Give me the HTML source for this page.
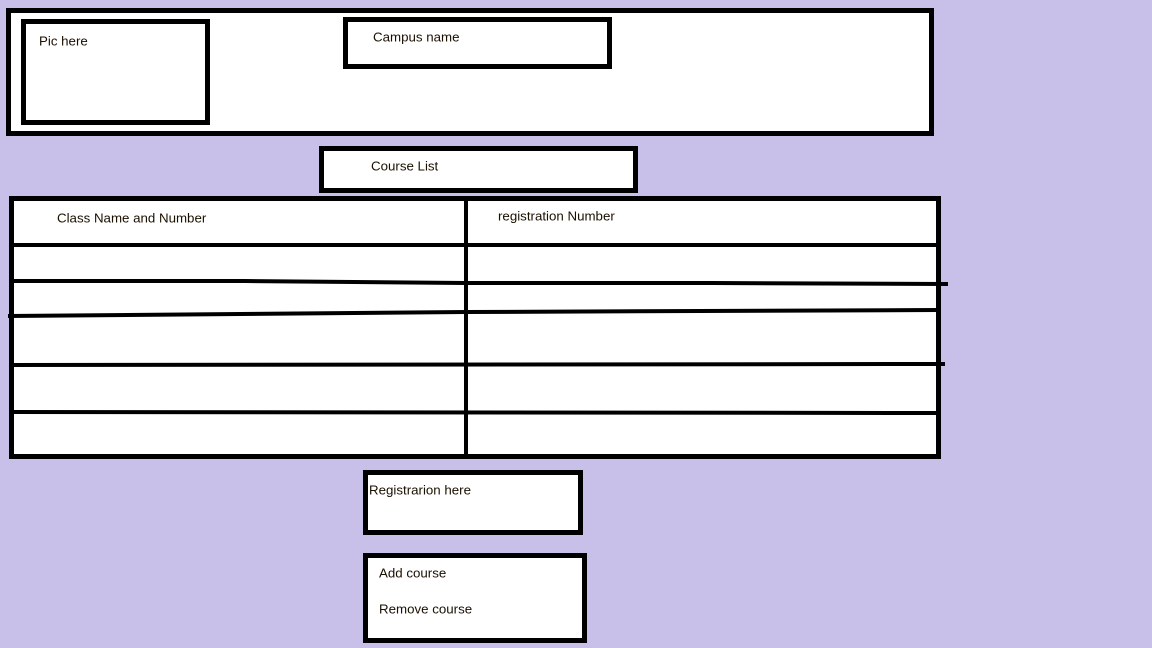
<!DOCTYPE html>
<html><head><meta charset="utf-8"><style>
html,body{margin:0;padding:0;background:#c8c0e8;}
svg{display:block}
text{font-family:"Liberation Sans",sans-serif;font-size:13.3px;fill:#1a1000;dominant-baseline:middle}
</style></head><body>
<svg width="1152" height="648" viewBox="0 0 1152 648" xmlns="http://www.w3.org/2000/svg">
<rect width="1152" height="648" fill="#c8c0e8"/>
<g fill="#fff" stroke="#000" stroke-width="5">
<rect x="8.5" y="10.5" width="923" height="123"/>
<rect x="23.5" y="21.5" width="184" height="101"/>
<rect x="345.5" y="19.5" width="264" height="47"/>
<rect x="321.5" y="148.5" width="314" height="42"/>
<rect x="11.5" y="198.5" width="927" height="258"/>
<rect x="365.5" y="472.5" width="215" height="60"/>
<rect x="365.5" y="555.5" width="219" height="85"/>
</g>
<g stroke="#000" stroke-width="4" fill="none">
<line x1="466" y1="198" x2="466" y2="459"/>
<line x1="11" y1="245" x2="939" y2="245"/>
<path d="M12 281 L245 281 L465 283 L712 283 L948 284"/>
<path d="M8 316 L240 314 L466 312 L700 311 L938 310"/>
<line x1="11" y1="365" x2="945" y2="364"/>
<line x1="11" y1="412" x2="939" y2="413"/>
</g>
<text x="39" y="42">Pic here</text>
<text x="373" y="38">Campus name</text>
<text x="371" y="167">Course List</text>
<text x="57" y="219">Class Name and Number</text>
<text x="498" y="217">registration Number</text>
<text x="369" y="491">Registrarion here</text>
<text x="379" y="574">Add course</text>
<text x="379" y="610">Remove course</text>
</svg>
</body></html>
